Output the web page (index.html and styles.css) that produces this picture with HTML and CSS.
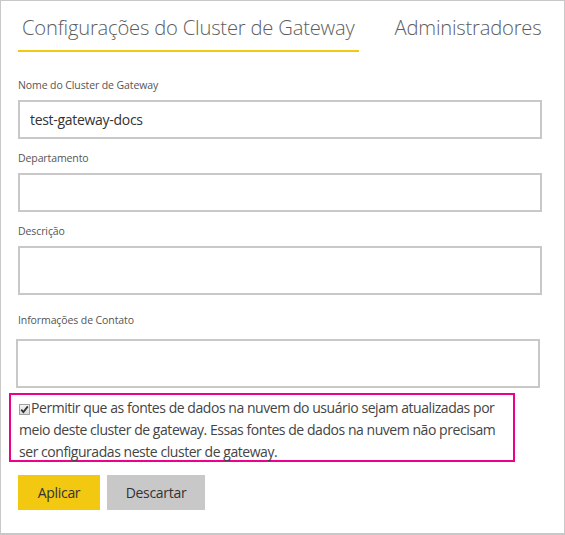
FILE: index.html
```html
<!DOCTYPE html>
<html lang="pt">
<head>
<meta charset="utf-8">
<link rel="stylesheet" href="styles.css">
</head>
<body>
<div class="frame">
  <div class="tabs">
    <div class="tab active">Configurações do Cluster de Gateway</div>
    <div class="tab">Administradores</div>
  </div>
  <div class="form">
    <div class="field">
      <div class="label">Nome do Cluster de Gateway</div>
      <div class="input">test-gateway-docs</div>
    </div>
    <div class="field">
      <div class="label">Departamento</div>
      <div class="input"></div>
    </div>
    <div class="field">
      <div class="label">Descrição</div>
      <div class="input tall"></div>
    </div>
    <div class="field contact">
      <div class="label">Informações de Contato</div>
      <div class="input tall"></div>
    </div>
    <div class="highlight">
      <p class="check-text"><span class="checkbox"><svg width="9" height="9" viewBox="0 0 9 9"><path d="M1.2 4.6 L3.4 7 L7.8 1.4" fill="none" stroke="#333" stroke-width="1.8"/></svg></span>Permitir que as fontes de dados na nuvem do usuário sejam atualizadas por meio deste cluster de gateway. Essas fontes de dados na nuvem não precisam ser configuradas neste cluster de gateway.</p>
    </div>
    <div class="buttons">
      <button class="btn primary">Aplicar</button>
      <button class="btn secondary">Descartar</button>
    </div>
  </div>
</div>
</body>
</html>
```

FILE: styles.css
```css
html, body {
  margin: 0;
  padding: 0;
  background: #fff;
}
.frame {
  width: 565px;
  height: 535px;
  box-sizing: border-box;
  border: 1px solid #c8c8c8;
  border-bottom-width: 2px;
  font-family: "Open Sans", "Noto Sans", sans-serif;
  color: #333;
}
.tabs {
  display: flex;
  padding: 12px 0 0 17px;
  gap: 32px;
}
.tab {
  font-size: 20.2px;
  font-weight: 300;
  color: #5e5e5e;
  letter-spacing: -0.2px;
  line-height: 28px;
  padding: 0 4px 9px 4px;
}
.tab.active {
  border-bottom: 2px solid #f2c811;
}
.form {
  padding: 26px 0 0 17px;
}
.field .label {
  font-size: 10.5px;
  color: #555;
  line-height: 14px;
  letter-spacing: -0.1px;
}
.field .input {
  box-sizing: border-box;
  width: 524px;
  height: 39px;
  border: 2px solid #c8c8c8;
  margin: 8px 0 12px 0;
  font-size: 14px;
  line-height: 35px;
  padding-left: 10px;
  color: #333;
  letter-spacing: -0.3px;
}
.field .input.tall {
  height: 49px;
}
.field.contact .label {
  margin-top: 18px;
}
.field.contact .input {
  margin: 12px 0 5px -2px;
}
.highlight {
  box-sizing: border-box;
  width: 506px;
  height: 69px;
  margin-left: -9px;
  border: 2px solid #ec008c;
  padding: 2px 8px 0 8px;
}
.check-text {
  margin: 0;
  font-size: 14px;
  line-height: 22px;
  color: #444;
  letter-spacing: -0.45px;
}
.checkbox {
  display: inline-flex;
  align-items: center;
  justify-content: center;
  box-sizing: border-box;
  width: 11px;
  height: 11px;
  border: 1px solid #a0a0a0;
  background: linear-gradient(#f4f4f4, #dcdcdc);
  margin-right: 1px;
  vertical-align: -1px;
}
.buttons {
  display: flex;
  gap: 7px;
  margin-top: 13px;
}
.btn {
  border: none;
  height: 35px;
  font-family: "Open Sans", "Noto Sans", sans-serif;
  font-size: 14px;
  color: #333;
  letter-spacing: -0.3px;
  padding: 0;
}
.btn.primary {
  width: 82px;
  background: #f2c811;
}
.btn.secondary {
  width: 98px;
  background: #c8c8c8;
}
```
